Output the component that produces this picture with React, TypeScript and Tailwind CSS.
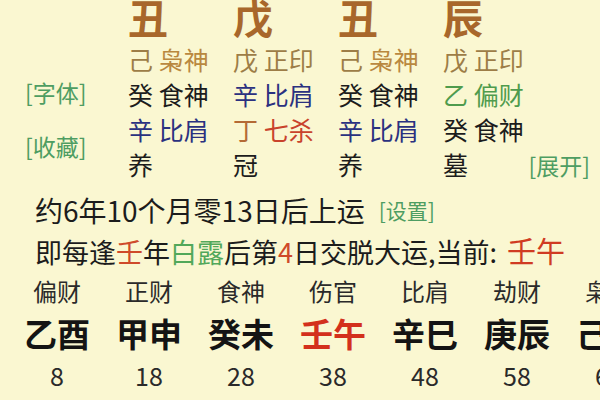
import React from 'react'

type Part = { t: string; c: string }

const cjk = "font-['Noto_Sans_CJK_SC','Noto_Sans',sans-serif]"

const BROWN = 'text-[#a8672b]'
const OLIVE = 'text-[#9d7d47]'
const ORANGE = 'text-[#b9883f]'
const BLACK = 'text-[#1c1c1c]'
const NAVY = 'text-[#2b3180]'
const GREEN = 'text-[#4f9b4d]'
const RUST = 'text-[#b46a35]'
const RED = 'text-[#c9432c]'
const LINK = 'text-[#4e9d62]'

const pillars: { top: string; rows: Part[][]; stage: string }[] = [
  {
    top: '丑',
    rows: [
      [{ t: '己', c: OLIVE }, { t: '枭神', c: ORANGE }],
      [{ t: '癸', c: BLACK }, { t: '食神', c: BLACK }],
      [{ t: '辛', c: NAVY }, { t: '比肩', c: NAVY }],
    ],
    stage: '养',
  },
  {
    top: '戊',
    rows: [
      [{ t: '戊', c: OLIVE }, { t: '正印', c: OLIVE }],
      [{ t: '辛', c: NAVY }, { t: '比肩', c: NAVY }],
      [{ t: '丁', c: RUST }, { t: '七杀', c: RED }],
    ],
    stage: '冠',
  },
  {
    top: '丑',
    rows: [
      [{ t: '己', c: OLIVE }, { t: '枭神', c: ORANGE }],
      [{ t: '癸', c: BLACK }, { t: '食神', c: BLACK }],
      [{ t: '辛', c: NAVY }, { t: '比肩', c: NAVY }],
    ],
    stage: '养',
  },
  {
    top: '辰',
    rows: [
      [{ t: '戊', c: OLIVE }, { t: '正印', c: OLIVE }],
      [{ t: '乙', c: GREEN }, { t: '偏财', c: GREEN }],
      [{ t: '癸', c: BLACK }, { t: '食神', c: BLACK }],
    ],
    stage: '墓',
  },
]

const dayun = [
  { god: '偏财', gz: '乙酉', age: 8 },
  { god: '正财', gz: '甲申', age: 18 },
  { god: '食神', gz: '癸未', age: 28 },
  { god: '伤官', gz: '壬午', age: 38, current: true },
  { god: '比肩', gz: '辛巳', age: 48 },
  { god: '劫财', gz: '庚辰', age: 58 },
  { god: '枭神', gz: '己卯', age: 68 },
]

export default function App() {
  return (
    <div className={`w-[600px] h-[400px] overflow-hidden bg-[#faf7d1] ${cjk}`}>
      {/* Pillars */}
      <div className="flex h-[183px]">
        <div className="w-[128px] shrink-0 pl-[25px] flex flex-col whitespace-nowrap">
          <span className={`mt-[77px] h-[30px] leading-[30px] text-[23px] ${LINK}`}>[字体]</span>
          <span className={`mt-[24px] h-[30px] leading-[30px] text-[23px] ${LINK}`}>[收藏]</span>
        </div>
        {pillars.map((p, i) => (
          <div key={i} className="w-[105px] shrink-0 flex flex-col whitespace-nowrap">
            <div className={`h-[42px] leading-[34px] text-[40px] font-bold ${BROWN}`}>{p.top}</div>
            {p.rows.map((r, j) => (
              <div key={j} className="h-[35px] leading-[34px] text-[25px]">
                <span className={r[0].c}>{r[0].t}</span> <span className={r[1].c}>{r[1].t}</span>
              </div>
            ))}
            <div className={`h-[35px] leading-[34px] text-[25px] ${BLACK}`}>{p.stage}</div>
          </div>
        ))}
        <div className="flex-1 min-w-0 flex flex-col justify-end items-end pr-[10px] whitespace-nowrap">
          <span className={`h-[35px] leading-[35px] text-[23px] ${LINK}`}>[展开]</span>
        </div>
      </div>

      {/* Qi yun */}
      <div className={`mt-[7px] h-[40px] leading-[40px] pl-[35px] text-[28px] whitespace-nowrap ${BLACK}`}>
        约6年10个月零13日后上运
        <span className={`ml-[14px] text-[21px] align-top ${LINK}`}>[设置]</span>
      </div>
      <div className={`h-[40px] leading-[40px] pl-[35px] text-[27px] whitespace-nowrap ${BLACK}`}>
        即每逢<span className="text-[#cf4a2a]">壬</span>年<span className="text-[#52a85a]">白露</span>后第
        <span className="text-[#cf4a2a]">4</span>日交脱大运,当前: <span className="ml-[4px] text-[29px] text-[#d03b22]">壬午</span>
      </div>

      {/* Da yun */}
      <div className="mt-[1px] flex pl-[11px] whitespace-nowrap">
        {dayun.map((d) => (
          <div key={d.age} className="w-[92px] shrink-0 flex flex-col items-center">
            <div className="h-[42px] leading-[40px] text-[24px] text-[#2a2a2a]">{d.god}</div>
            <div
              className={`h-[40px] leading-[40px] text-[33px] font-bold ${d.current ? 'text-[#d3301c]' : 'text-[#141414]'}`}
            >
              {d.gz}
            </div>
            <div className="h-[44px] leading-[44px] text-[25px] text-[#2a2a2a]">{d.age}</div>
          </div>
        ))}
      </div>
    </div>
  )
}
